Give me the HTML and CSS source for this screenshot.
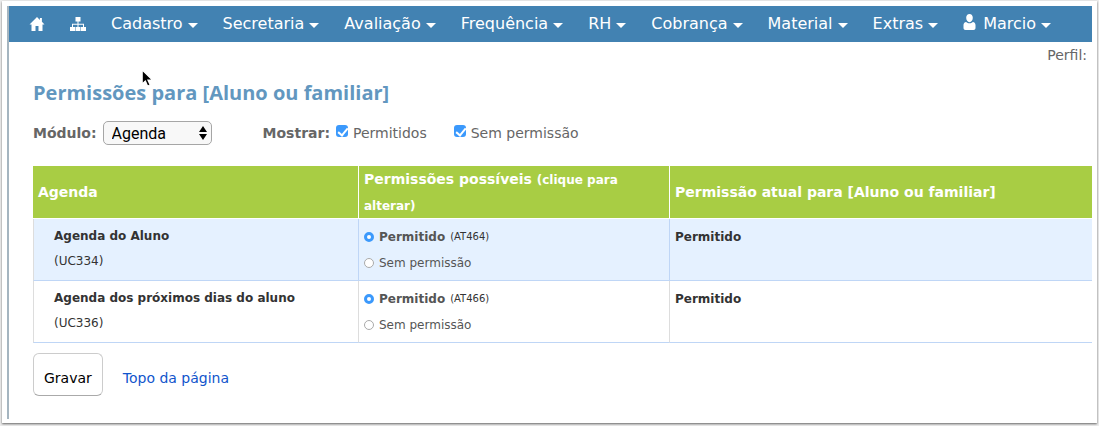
FILE: index.html
```html
<!DOCTYPE html>
<html lang="pt-BR">
<head>
    <meta charset="UTF-8">
    <meta name="viewport" content="width=device-width, initial-scale=1.0">
    <title>Permissões</title>
    <link rel="stylesheet" href="styles.css">
</head>
<body>
    <div class="window">
        <div class="page" id="topo">
            <nav class="navbar">
                <a class="nav-item" href="#" aria-label="Início">
                    <svg width="16" height="14" viewBox="0 0 15 14" fill="#fff"><path d="M7.5 0L0 7.4h2V14h4V9h3v5h4V7.4h2L12.4 4.8V1h-2v1.9z"/></svg>
                </a>
                <a class="nav-item" href="#" aria-label="Mapa">
                    <svg width="16" height="14" viewBox="0 0 16 14" fill="#fff"><path d="M5.500 0h5v4.500H8.500v2.300H14V10h2v4h-5v-4h2V7.800H8.500V10h2v4h-5v-4h2V7.800H3V10h2v4H0v-4h2V6.800h5.500V4.500h-2z"/></svg>
                </a>
                <button class="nav-item" type="button">Cadastro<span class="caret"></span></button>
                <button class="nav-item" type="button">Secretaria<span class="caret"></span></button>
                <button class="nav-item" type="button">Avaliação<span class="caret"></span></button>
                <button class="nav-item" type="button">Frequência<span class="caret"></span></button>
                <button class="nav-item" type="button">RH<span class="caret"></span></button>
                <button class="nav-item" type="button">Cobrança<span class="caret"></span></button>
                <button class="nav-item" type="button">Material<span class="caret"></span></button>
                <button class="nav-item" type="button">Extras<span class="caret"></span></button>
                <button class="nav-item" type="button">
                    <svg class="user-icon" width="13" height="16" viewBox="0 0 12 16" fill="#fff"><path d="M6 0c2 0 3.300 1.500 3.300 3.800S7.900 8.200 6 8.200 2.700 6.100 2.700 3.800 4 0 6 0zM2.600 8C3.600 8.900 4.800 9.200 6 9.200s2.400-.3 3.400-1.200C11 8.200 12 9.400 12 11v3c0 1.200-.8 2-2 2H2c-1.200 0-2-.8-2-2v-3c0-1.600 1-2.800 2.600-3z"/></svg>
                    Marcio<span class="caret"></span>
                </button>
            </nav>
            <div class="profile">Perfil:</div>
            <main class="content">
                <h1>Permissões para [Aluno ou familiar]</h1>
                <form>
                    <div class="filters">
                        <label class="filter-label" for="modulo">Módulo:</label>
                        <div class="select-wrap">
                            <select id="modulo">
                                <option>Agenda</option>
                            </select>
                            <svg class="select-arrows" width="8" height="14" viewBox="0 0 8 14"><path d="M4 0l4 6H0zM4 14l4-6H0z"/></svg>
                        </div>
                        <div class="show-group">
                            <span class="filter-label">Mostrar:</span>
                            <label class="check"><input type="checkbox" checked>Permitidos</label>
                            <label class="check"><input type="checkbox" checked>Sem permissão</label>
                        </div>
                    </div>
                    <table>
                        <thead>
                            <tr>
                                <th class="col-module">Agenda</th>
                                <th class="col-options">Permissões possíveis <small>(clique para alterar)</small></th>
                                <th>Permissão atual para [Aluno ou familiar]</th>
                            </tr>
                        </thead>
                        <tbody>
                            <tr>
                                <td class="module"><b>Agenda do Aluno</b><br>(UC334)</td>
                                <td>
                                    <label class="option"><input type="radio" name="uc334" checked><b>Permitido</b> <small>(AT464)</small></label>
                                    <label class="option"><input type="radio" name="uc334">Sem permissão</label>
                                </td>
                                <td><b>Permitido</b></td>
                            </tr>
                            <tr>
                                <td class="module"><b>Agenda dos próximos dias do aluno</b><br>(UC336)</td>
                                <td>
                                    <label class="option"><input type="radio" name="uc336" checked><b>Permitido</b> <small>(AT466)</small></label>
                                    <label class="option"><input type="radio" name="uc336">Sem permissão</label>
                                </td>
                                <td><b>Permitido</b></td>
                            </tr>
                        </tbody>
                    </table>
                    <div class="actions">
                        <button class="save" type="submit">Gravar</button>
                        <a href="#topo">Topo da página</a>
                    </div>
                </form>
            </main>
        </div>
    </div>
    <svg class="cursor" width="13" height="19" viewBox="0 0 12 18"><path d="M1 1v13l3-2.800 2.200 5 2.300-1-2.200-4.800h4.200z" stroke="#fff"/></svg>
</body>
</html>
```
FILE: styles.css
```css
* {
    box-sizing: border-box;
}
body {
    margin: 0;
    min-height: 100vh;
    padding: 1px 2px 3px;
    display: flex;
    background: #ededed;
    font-family: Verdana, "DejaVu Sans", sans-serif;
    font-size: 14px;
    color: #666;
}
button, select {
    font-family: inherit;
}
.window {
    flex: 1;
    display: flex;
    padding: 5px 5px 4px;
    background: #fff;
    box-shadow: 0 1px 2px #666;
}
.page {
    flex: 1;
    border-left: 2px solid #a5b5c0;
}

/* menu */
.navbar {
    display: flex;
    align-items: center;
    gap: 25px;
    height: 36px;
    padding: 0 20px;
    background: #4282b2;
}
.nav-item {
    display: flex;
    align-items: center;
    padding: 0;
    border: none;
    background: none;
    color: #fff;
    font-size: 16px;
    line-height: 20px;
    cursor: pointer;
}
.caret {
    margin: 2px 0 0 5px;
    border: 5px solid transparent;
    border-top-color: #fff;
    border-bottom: 0;
}
.user-icon {
    margin: 0 7px 4px 0;
}
.profile {
    padding: 4px 5px 0;
    line-height: 18px;
    text-align: right;
}

.content {
    padding-left: 24px;
}
h1 {
    margin: 15px 0 14px;
    font-family: "Open Sans", sans-serif;
    font-size: 20px;
    line-height: 28px;
    color: #6297bf;
}
.filters {
    display: flex;
    align-items: center;
    margin-bottom: 21px;
    line-height: 22px;
}
.filter-label {
    font-weight: bold;
}
.select-wrap {
    position: relative;
    margin-left: 6px;
}
select {
    display: block;
    width: 109px;
    height: 24px;
    padding: 0 8px;
    appearance: none;
    border: 1px solid #a6a6a6;
    border-radius: 5px;
    background: #f8f8f8;
    color: #000;
    font-family: Roboto, sans-serif;
    font-size: 16px;
}
.select-arrows {
    position: absolute;
    top: 5px;
    right: 5px;
    pointer-events: none;
}
.show-group {
    display: flex;
    align-items: center;
    margin-left: 51px;
}
.check {
    display: flex;
    align-items: center;
    margin-right: 21px;
}
input {
    appearance: none;
    flex: none;
}
.check input {
    width: 12px;
    height: 12px;
    margin: 0 5px 4px 6px;
    border-radius: 3px;
    background: #3b99fc;
}
.check input:checked::after {
    content: "";
    display: block;
    width: 4px;
    height: 8px;
    margin: 1px 0 0 4px;
    border: solid #fff;
    border-width: 0 2px 2px 0;
    transform: rotate(40deg);
}

/* tabela */
table {
    width: 100%;
    table-layout: fixed;
    border-collapse: separate;
    border-spacing: 0;
    font-size: 12px;
    line-height: 26px;
    color: #333;
}
.col-module {
    width: 326px;
}
.col-options {
    width: 311px;
}
th {
    padding: 0 5px;
    border-right: 1px solid #fff;
    border-bottom: 1px solid #fff;
    background: #a8cd44;
    color: #fff;
    font-size: 14px;
    text-align: left;
}
th small {
    font-size: 12px;
    line-height: 20px;
}
td {
    padding: 5px 5px 4px;
    border-right: 1px solid #ddd;
    border-bottom: 1px solid #bfd6f6;
    vertical-align: top;
}
tbody tr:nth-child(odd) td {
    border-right-color: #bfd6f6;
    background: #e5f1ff;
}
th:last-child, tbody tr td:last-child {
    border-right: none;
}
.module {
    padding-left: 20px;
    border-left: 1px solid #ddd;
    line-height: 25px;
}
.option {
    display: flex;
    align-items: center;
    color: #555;
}
.option small {
    margin-left: 5px;
    font-size: 10px;
    color: #333;
}
.option input {
    width: 10px;
    height: 10px;
    margin: 0 5px 0 0;
    border: 1px solid #aaa;
    border-radius: 50%;
    background: #fff;
}
.option input:checked {
    border: 3px solid #3b99fc;
}

.actions {
    display: flex;
    align-items: center;
    gap: 20px;
    padding-top: 10px;
}
.save {
    height: 43px;
    padding: 6px 10px 0;
    border: 1px solid #ccc;
    border-bottom-color: #aaa;
    border-radius: 6px;
    background: #fff;
    color: #000;
    font-size: 14px;
}
.actions a {
    padding-top: 6px;
    color: #1155cc;
    text-decoration: none;
}
.cursor {
    position: absolute;
    top: 69px;
    left: 141px;
    pointer-events: none;
}
```
